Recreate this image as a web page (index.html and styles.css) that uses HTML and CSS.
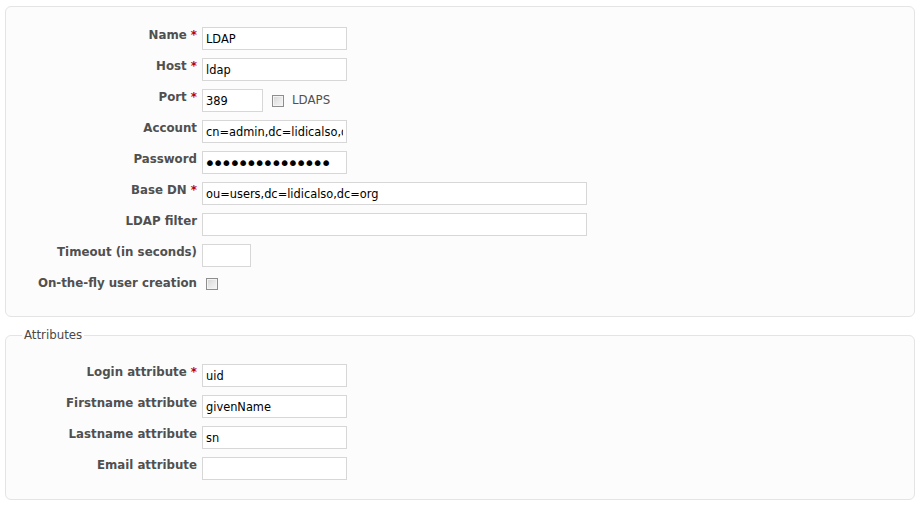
FILE: index.html
```html
<!DOCTYPE html>
<html>
<head>
<meta charset="utf-8">
<link rel="stylesheet" href="styles.css">
</head>
<body>
<div class="box main">
  <div class="row"><label class="lbl">Name <span class="req">*</span></label><input class="field w145" type="text" value="LDAP"></div>
  <div class="row"><label class="lbl">Host <span class="req">*</span></label><input class="field w145" type="text" value="ldap"></div>
  <div class="row"><label class="lbl">Port <span class="req">*</span></label><input class="field w61" type="text" value="389"><input class="check port-check" type="checkbox"><span class="inline-lbl">LDAPS</span></div>
  <div class="row"><label class="lbl">Account</label><input class="field w145" type="text" value="cn=admin,dc=lidicalso,dc=org"></div>
  <div class="row"><label class="lbl">Password</label><input class="field w145 pw" type="password" value="secretpassword1"></div>
  <div class="row"><label class="lbl">Base DN <span class="req">*</span></label><input class="field w385" type="text" value="ou=users,dc=lidicalso,dc=org"></div>
  <div class="row"><label class="lbl">LDAP filter</label><input class="field w385" type="text" value=""></div>
  <div class="row"><label class="lbl">Timeout (in seconds)</label><input class="field w49" type="text" value=""></div>
  <div class="row row-check"><label class="lbl">On-the-fly user creation</label><input class="check fly-check" type="checkbox"></div>
</div>
<fieldset class="box attrs">
  <legend class="legend">Attributes</legend>
  <div class="row"><label class="lbl">Login attribute <span class="req">*</span></label><input class="field w145" type="text" value="uid"></div>
  <div class="row"><label class="lbl">Firstname attribute</label><input class="field w145" type="text" value="givenName"></div>
  <div class="row"><label class="lbl">Lastname attribute</label><input class="field w145" type="text" value="sn"></div>
  <div class="row"><label class="lbl">Email attribute</label><input class="field w145" type="text" value=""></div>
</fieldset>
</body>
</html>
```
FILE: styles.css
```css
html, body {
  margin: 0;
  padding: 0;
  background: #ffffff;
}
body {
  padding: 6px 6px 0 5px;
  font-family: "DejaVu Sans", Verdana, sans-serif;
  font-size: 12px;
  color: #505050;
}
.box {
  background: #fcfcfc;
  border: 1px solid #e4e4e4;
  border-radius: 6px;
  margin: 0;
}
.main {
  padding: 20px 0 25px 0;
}
.row {
  display: flex;
  align-items: flex-start;
  margin-bottom: 8px;
}
.row:last-child {
  margin-bottom: 0;
}
.lbl {
  width: 191px;
  flex: none;
  text-align: right;
  font-weight: bold;
  font-size: 11.8px;
  line-height: 16px;
  color: #505050;
  margin-right: 5px;
  white-space: nowrap;
}
.req {
  color: #bb0000;
}
.field {
  box-sizing: border-box;
  height: 23px;
  border: 1px solid #d7d7d7;
  background: #ffffff;
  padding: 0 3px;
  margin: 0;
  font-family: "DejaVu Sans", Tahoma, sans-serif;
  font-size: 11.4px;
  color: #000000;
  outline: none;
  border-radius: 0;
}
.pw {
  font-size: 20px;
  letter-spacing: -3.5px;
  padding-left: 1px;
}
.w145 { width: 145px; }
.w61 { width: 61px; }
.w385 { width: 385px; }
.w49 { width: 49px; }
.check {
  appearance: none;
  -webkit-appearance: none;
  box-sizing: border-box;
  width: 12px;
  height: 12px;
  margin: 0;
  border: 1px solid #8e8e8e;
  background: linear-gradient(135deg, #d4d4d4 0%, #e8e8e8 50%, #f6f6f6 100%);
  box-shadow: inset 0 0 0 1px #f4f4f4;
  flex: none;
}
.port-check {
  margin: 6px 8px 0 9px;
}
.inline-lbl {
  line-height: 16px;
  padding-top: 3px;
  font-size: 11.8px;
  color: #505050;
}
.row-check .lbl {
  margin-right: 9px;
}
.fly-check {
  margin-top: 3px;
}
.attrs {
  margin-top: 11px;
  padding: 22px 0 19px 0;
  min-width: 0;
}
.legend {
  margin-left: 16px;
  padding: 0 2px;
  font-size: 11.8px;
  color: #484848;
  line-height: 14px;
}
```
